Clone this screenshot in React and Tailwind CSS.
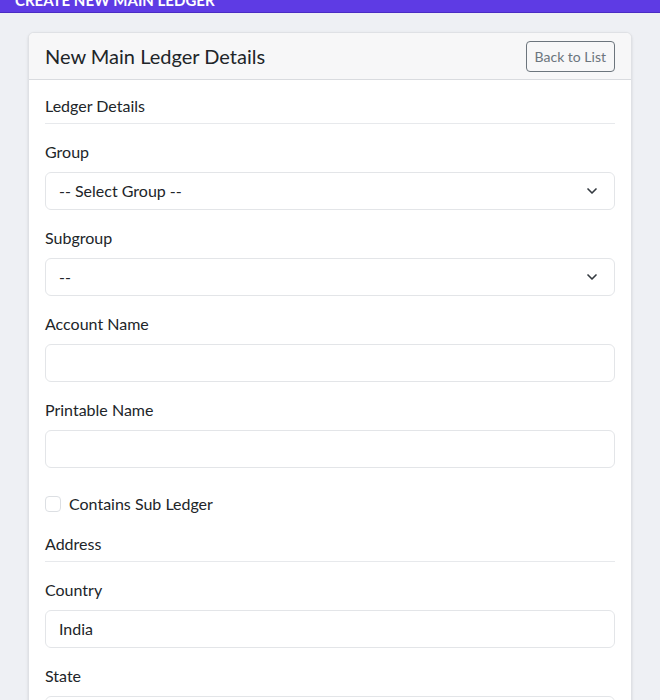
import { ChevronDown } from "lucide-react";

const font = { fontFamily: '"Lato", "Noto Sans", sans-serif' };

function Field({ label, children }) {
  return (
    <div className="mb-4">
      <label className="block text-[16px] leading-6 mb-2 text-[#212529]">{label}</label>
      {children}
    </div>
  );
}

function SelectBox({ value }) {
  return (
    <div className="flex h-[38px] items-center justify-between rounded-md border border-[#e3e5e8] bg-white pl-[13px] pr-[14px] text-[16px] text-[#212529]">
      <span>{value}</span>
      <ChevronDown size={16} strokeWidth={2.5} className="text-[#343a40]" />
    </div>
  );
}

function TextBox({ value = "" }) {
  return (
    <div className="flex h-[38px] items-center rounded-md border border-[#e3e5e8] bg-white px-[13px] text-[16px] text-[#212529]">
      {value}
    </div>
  );
}

function Section({ title }) {
  return (
    <div className="mb-4 border-b border-[#e7e9ec] pb-2 text-[16px] leading-[19px] text-[#212529]">
      {title}
    </div>
  );
}

export default function App() {
  return (
    <div className="min-h-screen bg-[#eef0f4]" style={font}>
      <div className="h-3 overflow-hidden bg-[#5e3be4] shadow-[0_1px_0_#4a2cc4]">
        <div className="-mt-[10px] px-[15px] text-[15px] font-bold uppercase leading-5 text-white">
          Create New Main Ledger
        </div>
      </div>

      <div className="px-[28px] pt-5">
        <div className="overflow-hidden rounded-md border border-[#dfe1e5] bg-white shadow-sm">
          <div className="flex h-[47px] items-center justify-between border-b border-[#d9dbdf] bg-[#f7f7f8] pl-4 pr-4">
            <h1 className="text-[20px] text-[#212529]">New Main Ledger Details</h1>
            <button className="h-[31px] rounded border border-[#6c757d] px-2 text-[14px] text-[#6c757d]">
              Back to List
            </button>
          </div>

          <div className="px-4 pt-4">
            <Section title="Ledger Details" />

            <Field label="Group">
              <SelectBox value="-- Select Group --" />
            </Field>
            <Field label="Subgroup">
              <SelectBox value="--" />
            </Field>
            <Field label="Account Name">
              <TextBox />
            </Field>
            <Field label="Printable Name">
              <TextBox />
            </Field>

            <div className="mb-[18px] mt-6 flex items-center gap-2 text-[16px] leading-6 text-[#212529]">
              <span className="h-4 w-4 rounded border border-[#dcdfe3] bg-white" />
              <span>Contains Sub Ledger</span>
            </div>

            <Section title="Address" />

            <Field label="Country">
              <TextBox value="India" />
            </Field>
            <Field label="State">
              <TextBox />
            </Field>
          </div>
        </div>
      </div>
    </div>
  );
}
